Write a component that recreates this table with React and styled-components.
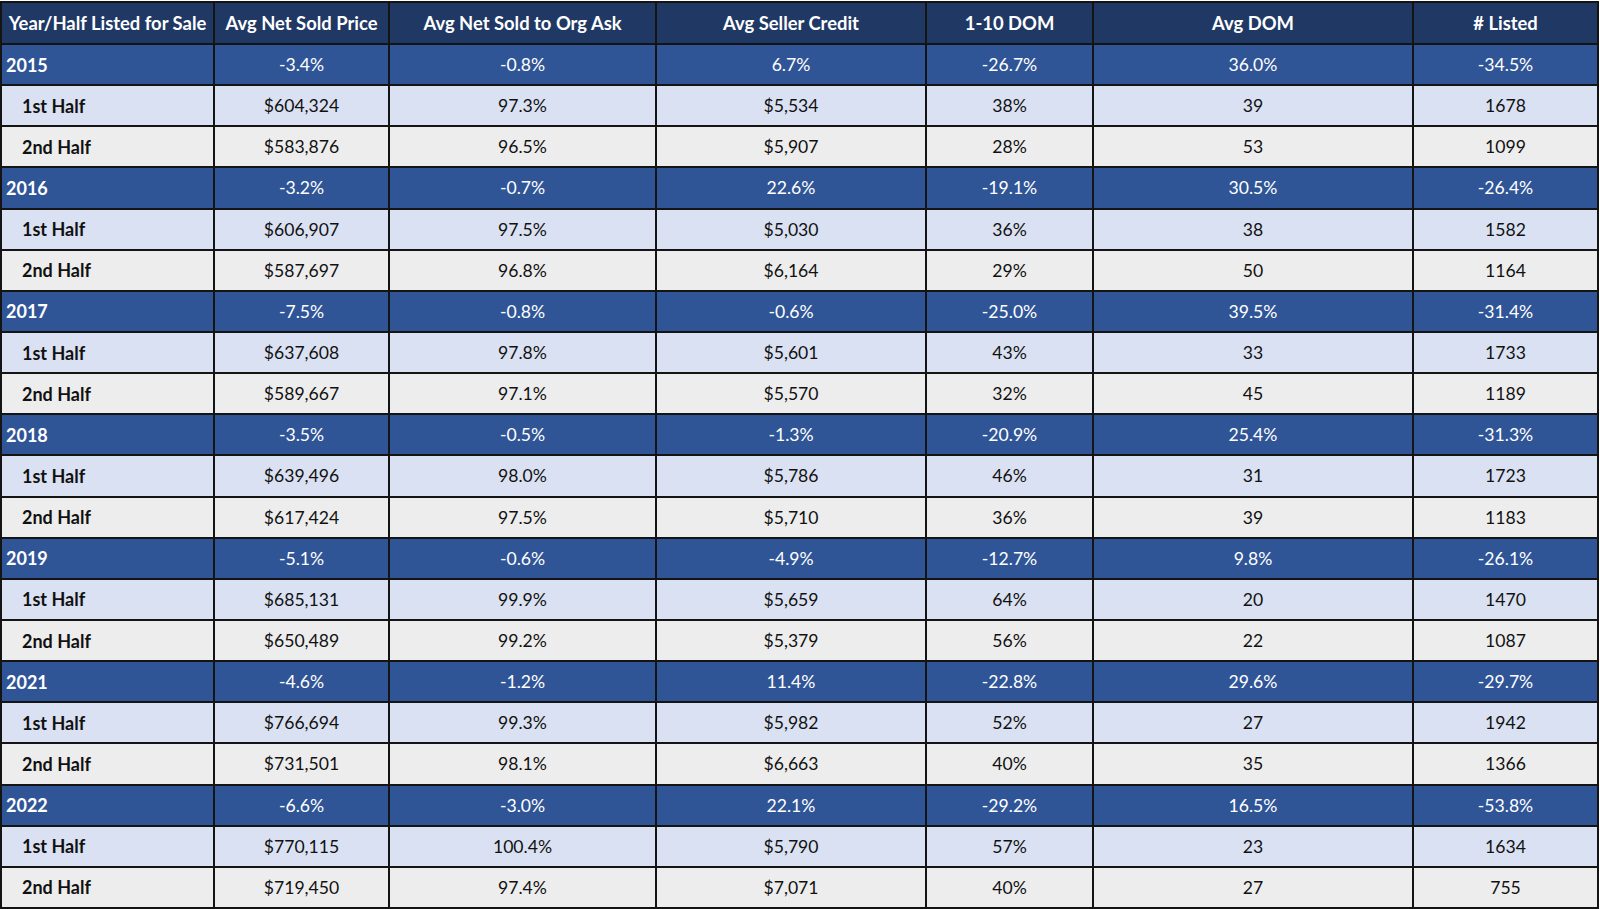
import styled, { createGlobalStyle } from "styled-components";

const GlobalStyle = createGlobalStyle`
  body {
    margin: 0;
    background: #ffffff;
    font-family: Lato, "Open Sans", sans-serif;
  }
`;

const Page = styled.div`
  padding-top: 1px;
  width: 1600px;
`;

const Table = styled.table`
  border-collapse: collapse;
  table-layout: fixed;
  width: 1597px;
  font-size: 17.6px;
  color: #111111;
`;

const HeadRow = styled.tr`
  height: 42px;
`;

const HeadCell = styled.th`
  background: #203864;
  color: #ffffff;
  font-size: 18.4px;
  font-weight: 700;
  text-align: center;
  white-space: nowrap;
  border: 2px solid #141414;
  padding: 0;
`;

const Row = styled.tr`
  height: 41.15px;
  background: ${(p) =>
    p.$kind === "year" ? "#2f5597" : p.$kind === "first" ? "#dae1f2" : "#ededed"};
  color: ${(p) => (p.$kind === "year" ? "#ffffff" : "#111111")};
`;

const LabelCell = styled.td`
  font-weight: 700;
  font-size: 18px;
  text-align: left;
  padding: 0 0 0 ${(p) => (p.$year ? "4px" : "20px")};
  border: 2px solid #141414;
  white-space: nowrap;
`;

const ValueCell = styled.td`
  text-align: center;
  padding: 0;
  border: 2px solid #141414;
  white-space: nowrap;
`;

const columns = [
  { title: "Year/Half Listed for Sale", width: 213 },
  { title: "Avg Net Sold Price", width: 175 },
  { title: "Avg Net Sold to Org Ask", width: 267 },
  { title: "Avg Seller Credit", width: 270 },
  { title: "1-10 DOM", width: 167 },
  { title: "Avg DOM", width: 320 },
  { title: "# Listed", width: 185 },
];

const years = [
  {
    year: "2015",
    change: ["-3.4%", "-0.8%", "6.7%", "-26.7%", "36.0%", "-34.5%"],
    first: ["$604,324", "97.3%", "$5,534", "38%", "39", "1678"],
    second: ["$583,876", "96.5%", "$5,907", "28%", "53", "1099"],
  },
  {
    year: "2016",
    change: ["-3.2%", "-0.7%", "22.6%", "-19.1%", "30.5%", "-26.4%"],
    first: ["$606,907", "97.5%", "$5,030", "36%", "38", "1582"],
    second: ["$587,697", "96.8%", "$6,164", "29%", "50", "1164"],
  },
  {
    year: "2017",
    change: ["-7.5%", "-0.8%", "-0.6%", "-25.0%", "39.5%", "-31.4%"],
    first: ["$637,608", "97.8%", "$5,601", "43%", "33", "1733"],
    second: ["$589,667", "97.1%", "$5,570", "32%", "45", "1189"],
  },
  {
    year: "2018",
    change: ["-3.5%", "-0.5%", "-1.3%", "-20.9%", "25.4%", "-31.3%"],
    first: ["$639,496", "98.0%", "$5,786", "46%", "31", "1723"],
    second: ["$617,424", "97.5%", "$5,710", "36%", "39", "1183"],
  },
  {
    year: "2019",
    change: ["-5.1%", "-0.6%", "-4.9%", "-12.7%", "9.8%", "-26.1%"],
    first: ["$685,131", "99.9%", "$5,659", "64%", "20", "1470"],
    second: ["$650,489", "99.2%", "$5,379", "56%", "22", "1087"],
  },
  {
    year: "2021",
    change: ["-4.6%", "-1.2%", "11.4%", "-22.8%", "29.6%", "-29.7%"],
    first: ["$766,694", "99.3%", "$5,982", "52%", "27", "1942"],
    second: ["$731,501", "98.1%", "$6,663", "40%", "35", "1366"],
  },
  {
    year: "2022",
    change: ["-6.6%", "-3.0%", "22.1%", "-29.2%", "16.5%", "-53.8%"],
    first: ["$770,115", "100.4%", "$5,790", "57%", "23", "1634"],
    second: ["$719,450", "97.4%", "$7,071", "40%", "27", "755"],
  },
];

const DataRow = ({ kind, label, values }) => (
  <Row $kind={kind}>
    <LabelCell $year={kind === "year"}>{label}</LabelCell>
    {values.map((v, i) => (
      <ValueCell key={i}>{v}</ValueCell>
    ))}
  </Row>
);

export default function App() {
  return (
    <Page>
      <GlobalStyle />
      <Table>
        <colgroup>
          {columns.map((c) => (
            <col key={c.title} style={{ width: c.width }} />
          ))}
        </colgroup>
        <thead>
          <HeadRow>
            {columns.map((c) => (
              <HeadCell key={c.title}>{c.title}</HeadCell>
            ))}
          </HeadRow>
        </thead>
        <tbody>
          {years.map((y) => [
            <DataRow key={y.year} kind="year" label={y.year} values={y.change} />,
            <DataRow key={y.year + "a"} kind="first" label="1st Half" values={y.first} />,
            <DataRow key={y.year + "b"} kind="second" label="2nd Half" values={y.second} />,
          ])}
        </tbody>
      </Table>
    </Page>
  );
}
